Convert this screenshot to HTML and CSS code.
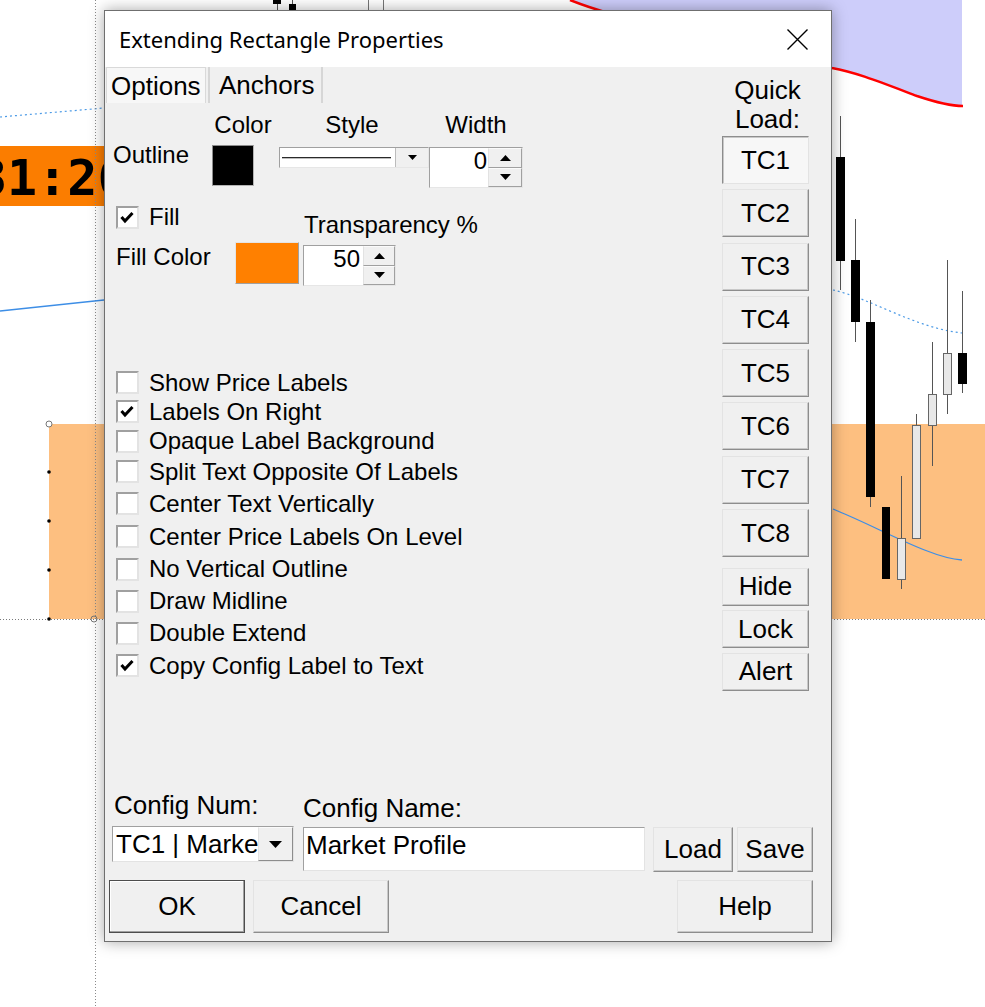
FILE: index.html
```html
<!DOCTYPE html>
<html lang="en">

<head>
    <meta charset="UTF-8">
    <meta name="viewport" content="width=device-width, initial-scale=1.0">
    <title>Extending Rectangle Properties</title>
    <link rel="stylesheet" href="styles.css">
</head>

<body>

    <!-- chart behind the dialog -->
    <svg class="chart" width="985" height="1007" viewBox="0 0 985 1007">
        <path d="M570 0 C590 8 615 16 660 26 L832 68 C855 72 880 82 917 96 C935 102 950 106 962 106 L962 0 Z" fill="#cdcdfa"/>
        <path d="M570 0 C590 8 615 16 660 26 L832 68 C855 72 880 82 917 96 C935 102 950 106 963 106" fill="none" stroke="#ff0000" stroke-width="2.5"/>

        <line x1="277.5" y1="0" x2="277.5" y2="10" stroke="#555"/>
        <rect x="273" y="0" width="8" height="4"/>
        <line x1="292.5" y1="0" x2="292.5" y2="10" stroke="#555"/>
        <rect x="289" y="4" width="7" height="6"/>
        <line x1="368.5" y1="0" x2="368.5" y2="10" stroke="#777"/>
        <line x1="383.5" y1="0" x2="383.5" y2="10" stroke="#777"/>

        <rect x="0" y="146" width="104" height="60" fill="#fb7d00"/>
        <text x="-23" y="195" class="clock">31:26</text>

        <path d="M0 117 L104 108" fill="none" stroke="#4d9be6" stroke-width="1.2" stroke-dasharray="2 3"/>
        <path d="M833 290 C870 298 915 328 962 333" fill="none" stroke="#4d9be6" stroke-width="1.2" stroke-dasharray="2 3"/>

        <rect x="49" y="424" width="936" height="195" fill="#fdbf80"/>
        <line x1="0" y1="619.5" x2="985" y2="619.5" stroke="#7a7a7a" stroke-dasharray="1 2"/>
        <line x1="95.5" y1="0" x2="95.5" y2="1007" stroke="#8a8a8a" stroke-dasharray="1 2"/>

        <path d="M0 311 L104 300" fill="none" stroke="#3d8ee6" stroke-width="1.3"/>
        <path d="M833 509 C880 528 930 558 962 560" fill="none" stroke="#3d8ee6" stroke-width="1.3"/>

        <circle cx="49" cy="472" r="1.8"/>
        <circle cx="49" cy="521" r="1.8"/>
        <circle cx="49" cy="570" r="1.8"/>
        <circle cx="49" cy="619" r="1.8"/>
        <circle cx="49" cy="424" r="3" fill="#fff" stroke="#777"/>
        <circle cx="94" cy="619" r="3" fill="none" stroke="#777"/>

        <g stroke="#555">
            <line x1="840.5" y1="116" x2="840.5" y2="290"/>
            <line x1="855.5" y1="219" x2="855.5" y2="342"/>
            <line x1="870.5" y1="300" x2="870.5" y2="507"/>
            <line x1="901.5" y1="476" x2="901.5" y2="589"/>
            <line x1="916.5" y1="414" x2="916.5" y2="425"/>
            <line x1="932.5" y1="342" x2="932.5" y2="466"/>
            <line x1="947.5" y1="260" x2="947.5" y2="414"/>
            <line x1="962.5" y1="291" x2="962.5" y2="393"/>
        </g>
        <rect x="836" y="157" width="9" height="104"/>
        <rect x="851" y="260" width="9" height="62"/>
        <rect x="866" y="322" width="9" height="175"/>
        <rect x="882" y="507" width="8" height="72"/>
        <g fill="#e8e8e8" stroke="#666">
            <rect x="897.5" y="538.5" width="8" height="41"/>
            <rect x="912.5" y="425.5" width="8" height="113"/>
            <rect x="928.5" y="394.5" width="8" height="31"/>
            <rect x="943.5" y="353.5" width="8" height="41"/>
        </g>
        <rect x="958" y="353" width="9" height="31"/>
    </svg>

    <div class="dialog">
        <div class="titlebar">
            <span class="title">Extending Rectangle Properties</span>
            <svg class="close" width="21" height="21" viewBox="0 0 21 21">
                <path d="M0.5 0.5 L20.5 20.5 M20.5 0.5 L0.5 20.5" stroke="#000" stroke-width="1.4"/>
            </svg>
        </div>

        <div class="client">
            <div class="upper">
                <div class="main">
                    <div class="tabs">
                        <span class="tab tab-active">Options</span>
                        <span class="tab">Anchors</span>
                    </div>

                    <div class="outline-head">
                        <span class="head-color">Color</span>
                        <span class="head-style">Style</span>
                        <span class="head-width">Width</span>
                    </div>
                    <div class="outline-row">
                        <span class="row-label">Outline</span>
                        <span class="swatch swatch-black"></span>
                        <div class="style-combo">
                            <div class="style-line"></div>
                            <div class="mini-drop">
                                <svg width="9" height="5" viewBox="0 0 9 5"><path d="M0 0 H9 L4.5 5 Z"/></svg>
                            </div>
                        </div>
                        <div class="spin spin-width">
                            <div class="spin-value">0</div>
                            <div class="spin-btns">
                                <div class="spin-btn"><svg width="11" height="6" viewBox="0 0 11 6"><path d="M0 6 H11 L5.5 0 Z"/></svg></div>
                                <div class="spin-btn"><svg width="11" height="6" viewBox="0 0 11 6"><path d="M0 0 H11 L5.5 6 Z"/></svg></div>
                            </div>
                        </div>
                    </div>

                    <div class="fill-row">
                        <label class="check fill-check"><span class="box"><svg width="19" height="19" viewBox="0 0 19 19"><path d="M3.5 9 L7 13 L14.5 5" fill="none" stroke="#000" stroke-width="3"/></svg></span>Fill</label>
                        <span class="transp-label">Transparency %</span>
                    </div>
                    <div class="fillcolor-row">
                        <span class="fc-label">Fill Color</span>
                        <span class="swatch swatch-orange"></span>
                        <div class="spin spin-transp">
                            <div class="spin-value">50</div>
                            <div class="spin-btns">
                                <div class="spin-btn"><svg width="11" height="6" viewBox="0 0 11 6"><path d="M0 6 H11 L5.5 0 Z"/></svg></div>
                                <div class="spin-btn"><svg width="11" height="6" viewBox="0 0 11 6"><path d="M0 0 H11 L5.5 6 Z"/></svg></div>
                            </div>
                        </div>
                    </div>

                    <div class="checklist">
                        <label class="check"><span class="box"></span>Show Price Labels</label>
                        <label class="check"><span class="box"><svg width="19" height="19" viewBox="0 0 19 19"><path d="M3.5 9 L7 13 L14.5 5" fill="none" stroke="#000" stroke-width="3"/></svg></span>Labels On Right</label>
                        <label class="check"><span class="box"></span>Opaque Label Background</label>
                        <label class="check"><span class="box"></span>Split Text Opposite Of Labels</label>
                        <label class="check"><span class="box"></span>Center Text Vertically</label>
                        <label class="check"><span class="box"></span>Center Price Labels On Level</label>
                        <label class="check"><span class="box"></span>No Vertical Outline</label>
                        <label class="check"><span class="box"></span>Draw Midline</label>
                        <label class="check"><span class="box"></span>Double Extend</label>
                        <label class="check"><span class="box"><svg width="19" height="19" viewBox="0 0 19 19"><path d="M3.5 9 L7 13 L14.5 5" fill="none" stroke="#000" stroke-width="3"/></svg></span>Copy Config Label to Text</label>
                    </div>
                </div>

                <div class="quick">
                    <div class="quick-title">Quick<br>Load:</div>
                    <div class="tc-list">
                        <button class="btn btn-pressed">TC1</button>
                        <button class="btn">TC2</button>
                        <button class="btn">TC3</button>
                        <button class="btn">TC4</button>
                        <button class="btn">TC5</button>
                        <button class="btn">TC6</button>
                        <button class="btn">TC7</button>
                        <button class="btn">TC8</button>
                    </div>
                    <div class="util-list">
                        <button class="btn">Hide</button>
                        <button class="btn">Lock</button>
                        <button class="btn">Alert</button>
                    </div>
                </div>
            </div>

            <div class="config">
                <div class="config-labels">
                    <span class="cfg-num">Config Num:</span>
                    <span class="cfg-name">Config Name:</span>
                </div>
                <div class="config-inputs">
                    <div class="cfg-combo">
                        <span class="cfg-combo-text">TC1 | Market Profile</span>
                        <div class="cfg-drop">
                            <svg width="13" height="7" viewBox="0 0 13 7"><path d="M0 0 H13 L6.5 7 Z"/></svg>
                        </div>
                    </div>
                    <div class="cfg-edit">Market Profile</div>
                    <button class="btn btn-load">Load</button>
                    <button class="btn btn-save">Save</button>
                </div>
            </div>

            <div class="actions">
                <button class="btn btn-ok">OK</button>
                <button class="btn btn-cancel">Cancel</button>
                <button class="btn btn-help">Help</button>
            </div>
        </div>
    </div>

</body>

</html>
```

FILE: styles.css
```css
body{
    margin: 0;
    width: 985px;
    height: 1007px;
    position: relative;
    overflow: hidden;
    background-color: #ffffff;
    font-family: "Liberation Sans", Arial, sans-serif;
    color: #000000;
}

.chart{
    position: absolute;
    left: 0;
    top: 0;
}

.clock{
    font-family: "DejaVu Sans Mono", monospace;
    font-weight: 700;
    font-size: 50px;
}

/* dialog window */
.dialog{
    position: absolute;
    left: 104px;
    top: 10px;
    width: 726px;
    height: 930px;
    border: 1px solid #6f6f6f;
    box-shadow: 0 0 14px rgba(0, 0, 0, 0.35);
    background-color: #f0f0f0;
    display: flex;
    flex-direction: column;
}

.titlebar{
    height: 56px;
    background-color: #ffffff;
    display: flex;
    align-items: center;
    justify-content: space-between;
    padding: 0 23px 0 14px;
}

.title{
    font-family: "Noto Sans", sans-serif;
    font-size: 22px;
}

.client{
    flex: 1;
    display: flex;
    flex-direction: column;
}

.upper{
    display: flex;
}

.main{
    flex: 1;
}

/* tabs */
.tabs{
    display: flex;
    height: 36px;
    padding-left: 1px;
}

.tab{
    box-sizing: border-box;
    height: 36px;
    font-size: 26px;
    line-height: 36px;
    width: 115px;
    margin-left: 2px;
    padding-left: 9px;
    border-left: 2px solid #d6d6d6;
    border-right: 2px solid #d6d6d6;
}

.tab-active{
    width: 100px;
    margin-left: 0;
    padding-left: 4px;
    background-color: #f7f7f7;
    border: 1px solid #d9d9d9;
    border-bottom: none;
}

/* outline */
.outline-head{
    display: flex;
    margin-top: 8px;
    padding-left: 106px;
    font-size: 24px;
    line-height: 28px;
}

.head-color{
    width: 64px;
    text-align: center;
}

.head-style{
    width: 154px;
    text-align: center;
}

.head-width{
    width: 94px;
    text-align: center;
}

.outline-row{
    display: flex;
    align-items: flex-start;
    margin-top: 2px;
    height: 47px;
}

.row-label{
    box-sizing: border-box;
    width: 107px;
    padding-left: 8px;
    font-size: 24px;
    line-height: 28px;
}

.swatch{
    box-sizing: border-box;
    display: block;
    border: 1px solid;
}

.swatch-black{
    margin-top: 4px;
    width: 42px;
    height: 41px;
    background-color: #000000;
    border-color: #8c8c8c #b4b4b4 #b4b4b4 #8c8c8c;
}

.style-combo{
    box-sizing: border-box;
    margin-left: 25px;
    margin-top: 6px;
    width: 150px;
    height: 21px;
    display: flex;
    background-color: #ffffff;
    border: 1px solid;
    border-color: #a0a0a0 #e6e6e6 #e6e6e6 #a0a0a0;
}

.style-line{
    flex: 1;
    height: 0;
    margin: 9px 4px 0 2px;
    border-top: 1px solid #2a2a2a;
    border-bottom: 1px solid #bdbdbd;
}

.mini-drop{
    box-sizing: border-box;
    width: 33px;
    display: flex;
    align-items: center;
    justify-content: center;
    background-color: #f0f0f0;
    border-left: 1px solid #bcbcbc;
}

/* spinner */
.spin{
    box-sizing: border-box;
    display: flex;
    height: 41px;
    background-color: #ffffff;
    border: 1px solid;
    border-color: #a0a0a0 #e6e6e6 #e6e6e6 #a0a0a0;
}

.spin-width{
    margin-top: 6px;
    width: 94px;
}

.spin-transp{
    margin-top: 4px;
    margin-left: 4px;
    width: 93px;
}

.spin-value{
    flex: 1;
    text-align: right;
    font-size: 24px;
    line-height: 26px;
    padding-right: 1px;
}

.spin-transp .spin-value{
    padding-right: 3px;
}

.spin-btns{
    width: 34px;
    display: flex;
    flex-direction: column;
}

.spin-transp .spin-btns{
    width: 32px;
}

.spin-btn{
    flex: 1;
    display: flex;
    align-items: center;
    justify-content: center;
    background-color: #f0f0f0;
    border: 1px solid;
    border-color: #fbfbfb #a0a0a0 #a0a0a0 #e2e2e2;
}

/* fill */
.fill-row{
    display: flex;
    margin-top: 15px;
    height: 36px;
}

.fill-check{
    box-sizing: border-box;
    width: 199px;
    height: 28px;
}

.transp-label{
    margin-top: 8px;
    font-size: 24px;
    line-height: 28px;
}

.fillcolor-row{
    display: flex;
    align-items: flex-start;
    margin-top: 2px;
    height: 45px;
}

.fc-label{
    box-sizing: border-box;
    width: 130px;
    padding-left: 11px;
    margin-top: 2px;
    font-size: 24px;
    line-height: 28px;
}

.swatch-orange{
    margin-top: 1px;
    width: 64px;
    height: 42px;
    background-color: #ff8000;
    border-color: #e4e4e4 #a0a0a0 #a0a0a0 #e4e4e4;
}

/* checkboxes */
.checklist{
    margin-top: 82px;
    display: grid;
    grid-template-rows: 29px 29px 30px 31px 33px 33px 32px 32px 32px 33px;
}

.check{
    display: flex;
    align-items: center;
    padding-left: 11px;
    font-size: 24px;
    line-height: 28px;
}

.box{
    box-sizing: border-box;
    width: 23px;
    height: 23px;
    margin-right: 10px;
    background-color: #ffffff;
    border: 2px solid;
    border-color: #a0a0a0 #e3e3e3 #e3e3e3 #a0a0a0;
}

.box svg{
    display: block;
}

/* quick load */
.quick{
    width: 87px;
    margin-right: 22px;
}

.quick-title{
    margin-top: 9px;
    padding-left: 4px;
    text-align: center;
    font-size: 26px;
    line-height: 29px;
}

.tc-list{
    margin-top: 2px;
    display: flex;
    flex-direction: column;
    gap: 5.3px;
}

.tc-list .btn{
    height: 48px;
}

.util-list{
    margin-top: 10.7px;
    display: flex;
    flex-direction: column;
    gap: 4.5px;
}

.util-list .btn{
    height: 38px;
}

.btn{
    box-sizing: border-box;
    padding: 0;
    font-family: "Liberation Sans", Arial, sans-serif;
    font-size: 26px;
    color: #000000;
    background-color: #f0f0f0;
    border: 1px solid;
    border-color: #e3e3e3 #8d8d8d #8d8d8d #e3e3e3;
    box-shadow: inset -1px -1px #c8c8c8;
}

.btn-pressed{
    background-color: #f7f7f7;
    border-color: #8d8d8d #e3e3e3 #e3e3e3 #8d8d8d;
    box-shadow: inset 1px 1px #c8c8c8;
}

/* config */
.config{
    margin-top: auto;
}

.config-labels{
    display: flex;
    height: 30px;
    font-size: 26px;
    line-height: 30px;
}

.cfg-num{
    box-sizing: border-box;
    width: 198px;
    padding-left: 9px;
}

.cfg-name{
    padding-top: 3px;
}

.config-inputs{
    display: flex;
    align-items: flex-start;
    margin-top: 6px;
    height: 46px;
}

.cfg-combo{
    box-sizing: border-box;
    margin-left: 7px;
    width: 182px;
    height: 36px;
    display: flex;
    background-color: #ffffff;
    border: 1px solid;
    border-color: #a0a0a0 #e3e3e3 #e3e3e3 #a0a0a0;
}

.cfg-combo-text{
    flex: 1;
    min-width: 0;
    overflow: hidden;
    white-space: nowrap;
    padding-left: 3px;
    font-size: 26px;
    line-height: 34px;
}

.cfg-drop{
    box-sizing: border-box;
    flex: none;
    width: 35px;
    display: flex;
    align-items: center;
    justify-content: center;
    background-color: #f0f0f0;
    border: 1px solid;
    border-color: #fbfbfb #8d8d8d #8d8d8d #e3e3e3;
}

.cfg-edit{
    box-sizing: border-box;
    margin-left: 9px;
    margin-top: 1px;
    width: 342px;
    height: 44px;
    padding-left: 2px;
    background-color: #ffffff;
    border: 1px solid;
    border-color: #a0a0a0 #e3e3e3 #e3e3e3 #a0a0a0;
    font-size: 26px;
    line-height: 34px;
}

.btn-load{
    margin-left: 8px;
    margin-top: 1px;
    width: 80px;
    height: 45px;
}

.btn-save{
    margin-left: 4px;
    margin-top: 1px;
    width: 76px;
    height: 45px;
}

/* bottom buttons */
.actions{
    display: flex;
    margin-top: 8px;
    margin-bottom: 8px;
    padding-left: 4px;
    height: 53px;
}

.actions .btn{
    width: 136px;
    height: 53px;
}

.btn-ok{
    border: 1px solid #4d4d4d;
    box-shadow: inset -1px -1px #a0a0a0, inset 1px 1px #ffffff;
}

.btn-cancel{
    margin-left: 8px;
}

.btn-help{
    margin-left: auto;
    margin-right: 18px;
}
```
